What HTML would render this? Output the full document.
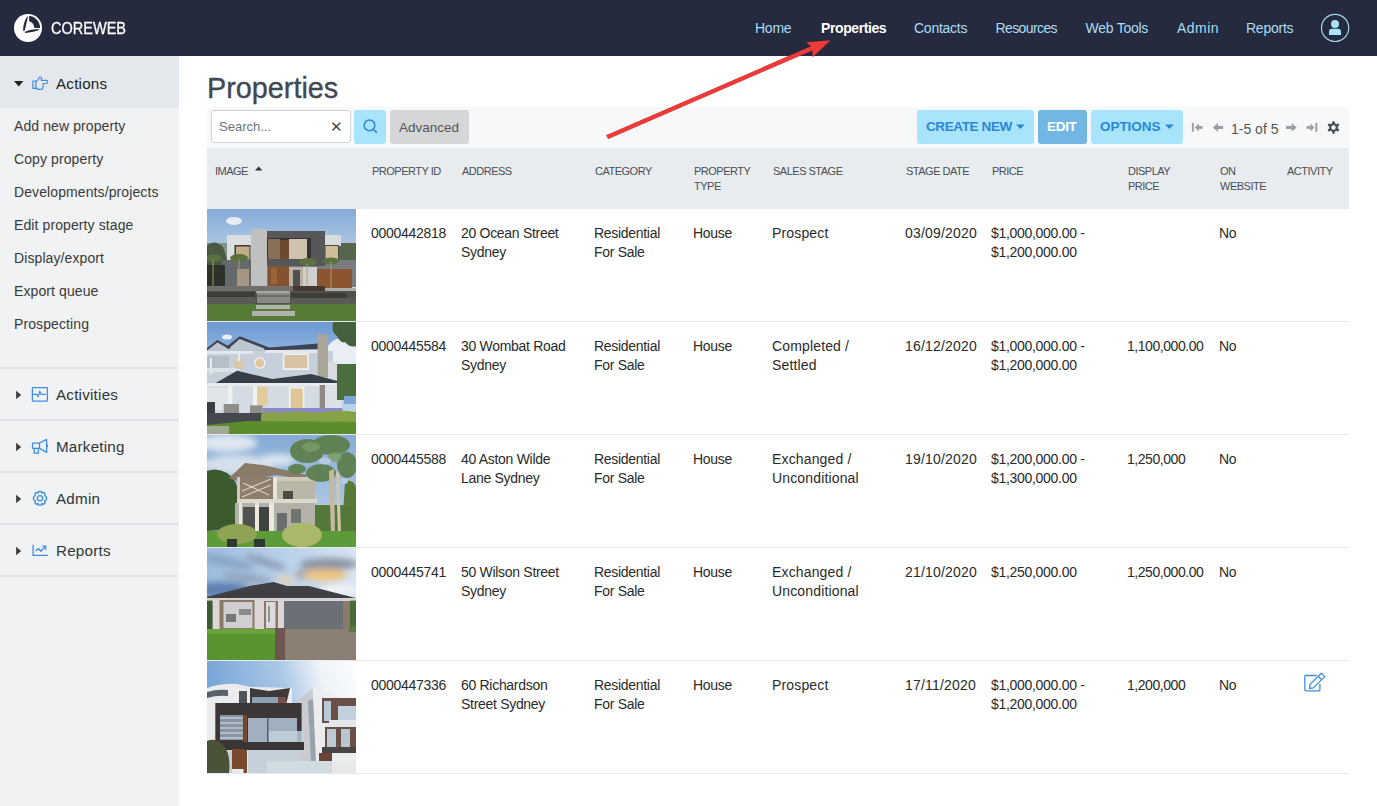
<!DOCTYPE html>
<html><head><meta charset="utf-8">
<style>
*{box-sizing:border-box;margin:0;padding:0}
html,body{width:1377px;height:806px;overflow:hidden;background:#fff;font-family:"Liberation Sans",sans-serif;color:#333}
.a{position:absolute;white-space:nowrap}
#nav{position:absolute;left:0;top:0;width:1377px;height:56px;background:#252a3e}
.nl{position:absolute;top:19px;font-size:14px;letter-spacing:-0.25px;color:#a8def7;line-height:18px}
#side{position:absolute;left:0;top:56px;width:179px;height:750px;background:#f1f2f4}
.si{position:absolute;left:14px;font-size:14px;letter-spacing:0.1px;color:#3a3a3a;line-height:18px}
.sh{position:absolute;left:0;width:179px;height:52px;border-bottom:2px solid #e0e3e7}
.sht{position:absolute;left:56px;font-size:15.2px;letter-spacing:0.22px;color:#30353c;line-height:18px}
.hd{position:absolute;top:163.5px;font-size:11px;letter-spacing:-0.5px;color:#484e56;line-height:15px;text-transform:uppercase}
.td{position:absolute;font-size:14px;letter-spacing:-0.3px;color:#2a2a2a;line-height:19px}
.rowb{position:absolute;left:207px;width:1142px;height:1px;background:#e6e9ed}
.img{position:absolute;left:207px;width:149px;height:112px;overflow:hidden}
</style></head><body>
<div id="nav">
  <svg class="a" style="left:12px;top:12px" width="32" height="32" viewBox="0 0 32 32">
    <circle cx="16" cy="16" r="14" fill="#fff"/>
    <path d="M15.2 4.6 L16 4.4 L12.8 18.4 L11.1 18.9 Q11.1 10.5 15.2 4.6Z" fill="#252a3e"/>
    <path d="M17.1 3.8 A12.2 12.2 0 0 1 28.1 15.9 L22.4 15.9 Q21.6 10.2 17.2 9.6Z" fill="#252a3e"/>
    <path d="M12.4 19.9 Q18 17.1 28 17 Q24 20.1 13.6 20.9Z" fill="#252a3e"/>
  </svg>
  <div class="a" style="left:51px;top:19px;font-size:16.5px;color:#fff;line-height:18px;transform:scaleX(0.88);transform-origin:0 0;-webkit-text-stroke:0.3px #fff">COREWEB</div>
  <div class="nl" style="left:755px">Home</div>
  <div class="nl" style="left:821px;color:#fff;font-weight:bold;letter-spacing:-0.4px">Properties</div>
  <div class="nl" style="left:914px">Contacts</div>
  <div class="nl" style="left:995.5px;letter-spacing:-0.6px">Resources</div>
  <div class="nl" style="left:1085.5px">Web Tools</div>
  <div class="nl" style="left:1177px;letter-spacing:0.45px">Admin</div>
  <div class="nl" style="left:1246px">Reports</div>
  <svg class="a" style="left:1320px;top:13px" width="30" height="30" viewBox="0 0 30 30">
    <circle cx="15.1" cy="14.9" r="13.6" fill="none" stroke="#a2d4ea" stroke-width="1.2"/>
    <circle cx="15" cy="11.1" r="4" fill="#aae2f8"/>
    <path d="M9 22 V18.6 Q9 15.8 12 15.8 H18 Q21 15.8 21 18.6 V22Z" fill="#aae2f8"/>
  </svg>
</div>

<div id="side">
  <div class="sh" style="top:0;background:#e4e7eb;border-bottom:none"></div>
  <svg class="a" style="left:14px;top:25px" width="10" height="6" viewBox="0 0 10 6"><path d="M0 0H9.4L4.7 5.4Z" fill="#222"/></svg>
  <svg class="a" style="left:28px;top:16px" width="24" height="22" viewBox="0 0 24 22" fill="none" stroke="#3c8ee0" stroke-width="1.2" stroke-linejoin="round">
    <path d="M4.9 9 H7.9 V16.4 H4.9 Z"/><path d="M7.9 9.2 L9.6 8.2 Q10.6 7.2 11 5.8 Q11.3 5 12.3 5 Q13.4 5 13.4 6.2 V8.4 H18.2 Q19.6 8.4 19.6 10 Q19.6 11.5 18.2 11.5 H15.3 L14.8 16.2 Q14.6 17.3 13.4 17.3 H10.4 Q9.6 17.3 9.2 16.4 H7.9"/>
  </svg>
  <div class="sht" style="top:19px;color:#222">Actions</div>
  <div class="si" style="top:61px">Add new property</div>
  <div class="si" style="top:94px">Copy property</div>
  <div class="si" style="top:127px">Developments/projects</div>
  <div class="si" style="top:160px">Edit property stage</div>
  <div class="si" style="top:193px">Display/export</div>
  <div class="si" style="top:226px">Export queue</div>
  <div class="si" style="top:259px">Prospecting</div>
  <div class="a" style="left:0;top:311px;width:179px;height:2px;background:#e0e3e7"></div>
  <div class="a" style="left:0;top:363px;width:179px;height:2px;background:#e0e3e7"></div>
  <div class="a" style="left:0;top:415px;width:179px;height:2px;background:#e0e3e7"></div>
  <div class="a" style="left:0;top:467px;width:179px;height:2px;background:#e0e3e7"></div>
  <div class="a" style="left:0;top:519px;width:179px;height:2px;background:#e0e3e7"></div>
<svg class="a" style="left:10px;top:324px" width="50" height="30" viewBox="0 0 50 30" fill="none" stroke="#3c8ee0" stroke-width="1.25" stroke-linejoin="round" stroke-linecap="round"><path d="M6.1 10.8 L11.2 15 L6.1 19.2Z" fill="#3a3d42" stroke="none"/>
<rect x="22.4" y="7.7" width="15" height="13.3" rx="0.6"/><path d="M22.4 14.3 H26.8 L28.1 16.6 L29.8 11.4 L31.1 14.3 H35.6"/></svg>
<svg class="a" style="left:10px;top:376px" width="50" height="30" viewBox="0 0 50 30" fill="none" stroke="#3c8ee0" stroke-width="1.25" stroke-linejoin="round" stroke-linecap="round"><path d="M6.1 10.8 L11.2 15 L6.1 19.2Z" fill="#3a3d42" stroke="none"/>
<rect x="22.5" y="11.2" width="7" height="5.2" rx="0.5"/><path d="M24.2 16.4 V21.2 H28.3 V16.4"/><path d="M29.5 11 L36.6 7.4 V20.4 L29.5 16.4"/><path d="M37.4 13 V14.6"/></svg>
<svg class="a" style="left:10px;top:428px" width="50" height="30" viewBox="0 0 50 30" fill="none" stroke="#3c8ee0" stroke-width="1.25" stroke-linejoin="round" stroke-linecap="round"><path d="M6.1 10.8 L11.2 15 L6.1 19.2Z" fill="#3a3d42" stroke="none"/>
<path id="gr" d="M28.6 7.4 H31.4 L31.9 9.2 L33.6 8.2 L35.3 9.9 L34.6 11.6 L36.5 12.9 V15.7 L34.6 16.9 L35.3 18.7 L33.6 20.4 L31.9 19.4 L31.4 21.2 H28.6 L28.1 19.4 L26.4 20.4 L24.7 18.7 L25.4 16.9 L23.5 15.7 V12.9 L25.4 11.6 L24.7 9.9 L26.4 8.2 L28.1 9.2 Z"/><circle cx="30" cy="14.3" r="2.6"/></svg>
<svg class="a" style="left:10px;top:480px" width="50" height="30" viewBox="0 0 50 30" fill="none" stroke="#3c8ee0" stroke-width="1.25" stroke-linejoin="round" stroke-linecap="round"><path d="M6.1 10.8 L11.2 15 L6.1 19.2Z" fill="#3a3d42" stroke="none"/>
<path d="M23.1 9.1 V19.4 H37.4"/><path d="M26.1 14.7 L28.3 12.5 L30.9 15.3 L35 11"/><path d="M32.6 10.2 H35.8 V13.4"/></svg>
  <div class="sht" style="top:330px">Activities</div>
  <div class="sht" style="top:382px">Marketing</div>
  <div class="sht" style="top:434px">Admin</div>
  <div class="sht" style="top:486px">Reports</div>
</div>

<div class="a" style="left:207px;top:72px;font-size:28.8px;color:#404854;line-height:32px;-webkit-text-stroke:0.35px #404854">Properties</div>

<!-- toolbar -->
<div class="a" style="left:207px;top:107px;width:1142px;height:41px;background:#f7f8fa"></div>
<div class="a" style="left:211px;top:110px;width:140px;height:33px;background:#fff;border:1px solid #cfd3d8;border-radius:3px"></div>
<div class="a" style="left:219px;top:119px;font-size:13px;color:#6c757d;line-height:16px">Search...</div>
<div class="a" style="left:330px;top:119px;font-size:15px;color:#4a4a4a;line-height:16px">&#x2715;</div>
<div class="a" style="left:354px;top:110px;width:32px;height:34px;background:#a8e5fc;border-radius:3px"></div>
<svg class="a" style="left:362px;top:118px" width="18" height="18" viewBox="0 0 18 18" fill="none" stroke="#2e86d0" stroke-width="1.5"><circle cx="7.5" cy="7.4" r="5.3"/><path d="M11.3 11.2L15 14.9"/></svg>
<div class="a" style="left:390px;top:110px;width:79px;height:34px;background:#d5d6d8;border-radius:3px"></div>
<div class="a" style="left:399px;top:120px;font-size:13.5px;color:#555;line-height:16px">Advanced</div>

<div class="a" style="left:917px;top:110px;width:117px;height:34px;background:#a8e5fc;border-radius:3px"></div>
<div class="a" style="left:926px;top:119px;font-size:13.5px;letter-spacing:-0.38px;font-weight:bold;color:#2a87d8;line-height:16px">CREATE NEW</div>
<svg class="a" style="left:1016px;top:124px" width="10" height="6" viewBox="0 0 10 6"><path d="M0 0.4H8.8L4.4 5Z" fill="#2e86d0"/></svg>
<div class="a" style="left:1038px;top:110px;width:49px;height:34px;background:#72b7e4;border-radius:3px"></div>
<div class="a" style="left:1047px;top:119px;font-size:13.5px;letter-spacing:-0.3px;font-weight:bold;color:#fff;line-height:16px">EDIT</div>
<div class="a" style="left:1091px;top:110px;width:92px;height:34px;background:#a8e5fc;border-radius:3px"></div>
<div class="a" style="left:1100px;top:119px;font-size:13.5px;letter-spacing:-0.05px;font-weight:bold;color:#2a87d8;line-height:16px">OPTIONS</div>
<svg class="a" style="left:1165px;top:124px" width="10" height="6" viewBox="0 0 10 6"><path d="M0 0.4H8.8L4.4 5Z" fill="#2e86d0"/></svg>

<svg class="a" style="left:1191px;top:122px" width="150" height="12" viewBox="0 0 150 12">
  <g fill="#9a9ea4">
    <rect x="0.9" y="0.9" width="1.9" height="8.9"/>
    <path d="M3.8 5.4 L7.9 1.4 L7.9 9.4Z"/><rect x="7.6" y="4" width="3.8" height="2.9"/>
    <path d="M21.9 5.4 L27 0.9 L27 9.8Z"/><rect x="26.8" y="3.9" width="5.4" height="3.1"/>
    <path d="M105.7 5.4 L100.6 0.9 L100.6 9.8Z"/><rect x="95" y="3.9" width="5.8" height="3.1"/>
    <path d="M123.4 5.4 L119.3 1.4 L119.3 9.4Z"/><rect x="115.6" y="4" width="3.9" height="2.9"/>
    <rect x="124.4" y="0.9" width="1.9" height="8.9"/>
  </g>
</svg>
<div class="a" style="left:1231px;top:121px;font-size:14px;color:#555;line-height:16px">1-5 of 5</div>
<svg class="a" style="left:1327px;top:121px" width="13" height="13" viewBox="0 0 13 13"><g fill="#4b5058"><circle cx="6.5" cy="6.5" r="4.4"/><g id="gt"><rect x="5.2" y="0.3" width="2.6" height="12.4" rx="0.6"/></g><use href="#gt" transform="rotate(60 6.5 6.5)"/><use href="#gt" transform="rotate(120 6.5 6.5)"/></g><circle cx="6.5" cy="6.5" r="2.2" fill="#f7f8fa"/></svg>

<!-- header -->
<div class="a" style="left:207px;top:148px;width:1142px;height:61px;background:#e9ecef"></div>
<div class="hd" style="left:215px">Image</div>
<svg class="a" style="left:255px;top:166px" width="8" height="5" viewBox="0 0 8 5"><path d="M0 4.6H7.4L3.7 0.6Z" fill="#333"/></svg>
<div class="hd" style="left:372px">Property ID</div>
<div class="hd" style="left:462px">Address</div>
<div class="hd" style="left:595px">Category</div>
<div class="hd" style="left:694px">Property<br>Type</div>
<div class="hd" style="left:773px">Sales Stage</div>
<div class="hd" style="left:906px">Stage Date</div>
<div class="hd" style="left:992px">Price</div>
<div class="hd" style="left:1128px">Display<br>Price</div>
<div class="hd" style="left:1220px">On<br>Website</div>
<div class="hd" style="left:1287px">Activity</div>

<!-- rows -->
<div id="rows">
<div class="img" style="top:209px"><svg width="149" height="112" viewBox="0 0 149 112">
<defs><linearGradient id="sk0" x1="0" y1="0" x2="0" y2="1"><stop offset="0" stop-color="#84abd8"/><stop offset="0.5" stop-color="#c2d6ea"/><stop offset="1" stop-color="#d4e2ec"/></linearGradient></defs>
<rect width="149" height="112" fill="url(#sk0)"/>
<ellipse cx="27" cy="12" rx="8" ry="4" fill="#e6ecf4"/>
<rect x="0" y="34" width="20" height="48" fill="#7e9484"/>
<path d="M0 36 Q8 30 16 38 L20 50 L20 82 L0 82Z" fill="#4a5a40"/>
<rect x="132" y="34" width="17" height="18" fill="#55664a"/>
<rect x="20" y="26" width="24" height="27" fill="#dcdedf"/>
<rect x="27.5" y="36" width="16" height="15.5" fill="#3c3a38"/>
<rect x="29" y="37.5" width="13.5" height="13" fill="#c4ac86"/>
<rect x="117" y="26" width="17" height="11" fill="#dadcdd"/>
<rect x="117" y="36" width="15" height="15.5" fill="#4a4846"/>
<rect x="118.5" y="37" width="12.5" height="14" fill="#d0bc98"/>
<rect x="15" y="51" width="134" height="27" fill="#7a7d80"/>
<rect x="15" y="51" width="29" height="27" fill="#66696b"/>
<rect x="0" y="56" width="18" height="26" fill="#2c3228"/>
<rect x="54" y="22" width="64" height="35" fill="#555759"/>
<rect x="60" y="29" width="44" height="21" fill="#3a3430"/>
<rect x="61" y="30" width="12" height="20" fill="#8a7058"/>
<rect x="73" y="31" width="9" height="19" fill="#6c4a30"/>
<rect x="82" y="30" width="18" height="20" fill="#cfc3b0"/>
<rect x="44" y="20" width="16" height="58" fill="#bfc1c1"/>
<rect x="61" y="57" width="21" height="20" fill="#85522f"/>
<rect x="64" y="59" width="6" height="16" fill="#9a6438"/>
<rect x="82" y="58" width="14" height="19" fill="#b8b0a2"/>
<rect x="86" y="61" width="7" height="16" fill="#50504e"/>
<rect x="96" y="58" width="14" height="20" fill="#cfcfcd"/>
<rect x="110" y="60" width="35" height="20" fill="#8a5530"/>
<rect x="30" y="60" width="12" height="17" fill="#a49680"/>
<g fill="#5a7240">
<path d="M0 50 Q7 42 15 50 Q7 47 0 50Z"/><ellipse cx="7" cy="49" rx="8" ry="3.5"/>
<ellipse cx="32" cy="49" rx="9" ry="4"/><ellipse cx="101" cy="53" rx="9" ry="4"/><ellipse cx="124" cy="52" rx="8" ry="3.5"/>
</g>
<g stroke="#b09c78" stroke-width="0.9"><path d="M6 51V82M32 51V80M100 55V82M124 53V84"/></g>
<rect x="0" y="77" width="86" height="5.5" fill="#716e6b"/>
<rect x="86" y="77" width="32" height="6" fill="#4a3630"/>
<rect x="118" y="79" width="31" height="9" fill="#acacaa"/>
<rect x="0" y="82" width="149" height="14" fill="#4e524a"/>
<rect x="0" y="83" width="48" height="5" fill="#3a3e36"/>
<rect x="84" y="84" width="56" height="5" fill="#3a3e36"/>
<rect x="0" y="88" width="48" height="7" fill="#5a5a55"/>
<rect x="84" y="89" width="65" height="7" fill="#5a5a55"/>
<rect x="50" y="82" width="33" height="12" fill="#8c8a86"/>
<rect x="50" y="86" width="33" height="2" fill="#6e6c6a"/>
<rect x="49" y="82" width="34" height="2" fill="#a6a6a2"/>
<rect x="0" y="95" width="149" height="17" fill="#587a38"/>
<rect x="49" y="96" width="34" height="4" fill="#b0b2b0"/>
<rect x="45" y="102" width="43" height="5" fill="#b0b2b0"/>
</svg></div>
<div class="td" style="left:371px;top:224px">0000442818</div>
<div class="td" style="left:461px;top:224px">20 Ocean Street<br>Sydney</div>
<div class="td" style="left:594px;top:224px">Residential<br>For Sale</div>
<div class="td" style="left:693px;top:224px">House</div>
<div class="td" style="letter-spacing:0.15px;left:772px;top:224px">Prospect</div>
<div class="td" style="letter-spacing:0.2px;left:905px;top:224px">03/09/2020</div>
<div class="td" style="left:991px;top:224px">$1,000,000.00 -<br>$1,200,000.00</div>
<div class="td" style="left:1219px;top:224px">No</div>
<div class="rowb" style="top:321px"></div>
<div class="img" style="top:322px"><svg width="149" height="112" viewBox="0 0 149 112">
<defs><linearGradient id="sk1" x1="0" y1="0" x2="0" y2="1"><stop offset="0" stop-color="#6a99d2"/><stop offset="0.45" stop-color="#a9c6e6"/><stop offset="1" stop-color="#c8daea"/></linearGradient></defs>
<rect width="149" height="112" fill="url(#sk1)"/>
<ellipse cx="20" cy="15" rx="5" ry="2.6" fill="#e6edf5"/>
<path d="M120 26 Q126 14 138 17 Q149 18 149 28 L149 46 L124 46 Q116 38 120 26Z" fill="#e9eef4"/>
<path d="M126 0 H149 V24 Q143 26 138 20 Q134 22 130 14 Q124 10 126 0Z" fill="#45603f"/>
<path d="M0 27 L10 19 L22 25 L33 15 L58 27 L112 22 L115 27 L58 31 L20 32 L0 32Z" fill="#bcc6d2"/>
<path d="M0 26 L10.4 18 L24 25.5 L22 27 L10.4 20.5 L0 28.5Z" fill="#3c4454"/>
<path d="M19 25 L32.7 14.2 L66 27 L64 29 L32.7 17 L21 27Z" fill="#3c4454"/>
<path d="M57 26 L75 24.6 L111 21.6 L116 25 L113 27 L75 28 L58 29Z" fill="#3c4454"/>
<rect x="0" y="29" width="126" height="31" fill="#c6d0da"/>
<rect x="0" y="29" width="46" height="3" fill="#e4e8ec"/>
<rect x="58" y="28" width="56" height="3" fill="#e4e8ec"/>
<rect x="0" y="34" width="22" height="14" fill="#b4bfca"/>
<rect x="3" y="36" width="1.8" height="16" fill="#eef0f2"/>
<rect x="31" y="31" width="1.8" height="17" fill="#eef0f2"/>
<rect x="27" y="39" width="10" height="8" fill="#dcc8a8"/>
<rect x="0" y="46" width="30" height="4" fill="#dde2e8"/>
<circle cx="52.8" cy="41" r="5.8" fill="#eef0f2"/>
<circle cx="52.8" cy="41" r="4.4" fill="#e0c59c"/>
<rect x="75.8" y="31.3" width="26.2" height="16.7" fill="#f0f2f4"/>
<rect x="77.4" y="33" width="23" height="13.2" fill="#d6c3a4"/>
<rect x="110.6" y="12.2" width="10.4" height="43" fill="#a9a598"/>
<rect x="121" y="40" width="9" height="22" fill="#d9dde2"/>
<path d="M8.3 61.2 L30 48.7 L65.4 57 L104 52 L130.7 59 L134 62 L8 63Z" fill="#363e4c"/>
<rect x="0" y="61" width="136" height="3.2" fill="#e8ebee"/>
<rect x="0" y="64" width="135" height="28" fill="#d4dbe2"/>
<rect x="0" y="66" width="22" height="22" fill="#e0e4e8"/>
<rect x="21" y="64" width="4.5" height="20" fill="#eef0f2"/>
<rect x="46" y="64" width="4.5" height="22" fill="#eef0f2"/>
<rect x="50" y="64.7" width="10.5" height="18.7" fill="#e3cb9c"/>
<rect x="82" y="64.7" width="15.4" height="24.3" fill="#f2f3f3"/>
<rect x="83.6" y="66.4" width="12.2" height="21" fill="#dfc59a"/>
<rect x="112.7" y="63" width="5.3" height="29" fill="#8e8a80"/>
<rect x="118" y="63" width="17" height="28" fill="#dde1e6"/>
<rect x="16.7" y="82" width="15.3" height="12.6" fill="#8e8d88"/>
<rect x="43" y="83.4" width="12.6" height="14" fill="#8e8d88"/>
<rect x="0" y="80" width="8" height="12" fill="#3a3d44"/>
<rect x="130" y="42" width="19" height="36" fill="#4c6e3e"/>
<rect x="137" y="74" width="12" height="8" fill="#7aa6d8"/>
<rect x="0" y="91" width="56" height="12" fill="#45484f"/>
<rect x="55.6" y="86" width="80" height="8.6" fill="#8c89c8"/>
<path d="M54 92 Q60 88 70 91 Q90 88 110 91 Q130 87 149 90 V105 H54Z" fill="#85a244"/>
<path d="M0 103 L40 99 L149 100 V112 H0Z" fill="#5c8c2c"/>
<rect x="0" y="104" width="22" height="8" fill="#a2aa94"/>
</svg></div>
<div class="td" style="left:371px;top:337px">0000445584</div>
<div class="td" style="left:461px;top:337px">30 Wombat Road<br>Sydney</div>
<div class="td" style="left:594px;top:337px">Residential<br>For Sale</div>
<div class="td" style="left:693px;top:337px">House</div>
<div class="td" style="letter-spacing:0.15px;left:772px;top:337px">Completed /<br>Settled</div>
<div class="td" style="letter-spacing:0.2px;left:905px;top:337px">16/12/2020</div>
<div class="td" style="left:991px;top:337px">$1,000,000.00 -<br>$1,200,000.00</div>
<div class="td" style="letter-spacing:-0.45px;left:1127px;top:337px">1,100,000.00</div>
<div class="td" style="left:1219px;top:337px">No</div>
<div class="rowb" style="top:434px"></div>
<div class="img" style="top:435px"><svg width="149" height="112" viewBox="0 0 149 112">
<defs><linearGradient id="sk2" x1="0" y1="0" x2="0" y2="1"><stop offset="0" stop-color="#86abd6"/><stop offset="1" stop-color="#c4d6ea"/></linearGradient>
<filter id="bl2" x="-50%" y="-50%" width="200%" height="200%"><feGaussianBlur stdDeviation="3"/></filter></defs>
<rect width="149" height="112" fill="url(#sk2)"/>
<g filter="url(#bl2)">
<ellipse cx="20" cy="8" rx="30" ry="9" fill="#dfe7f0"/>
<ellipse cx="30" cy="30" rx="35" ry="10" fill="#d6e0ec"/>
<ellipse cx="70" cy="25" rx="18" ry="6" fill="#dde6f0"/>
</g>
<path d="M138 46 Q146 44 149 52 L149 80 L136 80Z" fill="#5a7a3a"/>
<rect x="108" y="70" width="41" height="26" fill="#557838"/>
<path d="M0 36 Q10 32 20 38 Q30 44 32 60 L32 94 L0 96Z" fill="#3d5a2e"/>
<path d="M22 43 L38 28 L56 30 L100 40 L98 45 L70 40 L30 46Z" fill="#8a7a6a"/>
<rect x="30" y="42" width="78" height="24" fill="#cfcabd"/>
<rect x="33" y="42" width="33" height="22" fill="#8d7e70"/>
<g stroke="#d6d1c2" stroke-width="1.2"><path d="M35 56 L64 44M35 62 L64 50M36 48 L62 60"/></g>
<rect x="66" y="42" width="4" height="60" fill="#e8e5db"/>
<rect x="70" y="46" width="38" height="18" fill="#bab6a8"/>
<rect x="76" y="56" width="10" height="8" fill="#4d4a44"/>
<rect x="30" y="64" width="80" height="4" fill="#ddd8cc"/>
<rect x="28" y="68" width="80" height="32" fill="#b4b2a8"/>
<rect x="36" y="72" width="12" height="26" fill="#4f524e"/>
<rect x="52" y="72" width="12" height="26" fill="#3e413e"/>
<rect x="70" y="78" width="10" height="20" fill="#6a6e6c"/>
<rect x="84" y="74" width="10" height="14" fill="#727672"/>
<rect x="32" y="68" width="3" height="30" fill="#e8e6de"/>
<rect x="48" y="68" width="4" height="32" fill="#ebe8e0"/>
<rect x="62" y="68" width="5" height="34" fill="#ebe8e0"/>
<g fill="#5c7c48" opacity="0.9">
<ellipse cx="100" cy="16" rx="17" ry="12"/>
<ellipse cx="124" cy="10" rx="19" ry="10"/>
<ellipse cx="140" cy="30" rx="10" ry="13"/>
<ellipse cx="114" cy="38" rx="15" ry="9"/>
<ellipse cx="90" cy="34" rx="9" ry="5"/>
</g>
<g fill="#7e9c66" opacity="0.8"><ellipse cx="104" cy="12" rx="9" ry="5"/><ellipse cx="128" cy="22" rx="7" ry="5"/></g>
<ellipse cx="118" cy="26" rx="6" ry="3.5" fill="#b4cae2"/>
<ellipse cx="137" cy="46" rx="4" ry="3" fill="#b4cae2"/>
<path d="M122 36 L124 100 L128 100 L127 34Z" fill="#c9b89e"/>
<path d="M129 38 L131 100 L134 100 L132 36Z" fill="#d4c6ae"/>
<rect x="0" y="96" width="149" height="16" fill="#5d9a38"/>
<ellipse cx="30" cy="99" rx="20" ry="10" fill="#8ea454"/>
<ellipse cx="95" cy="100" rx="20" ry="12" fill="#a9b86a"/>
<rect x="20" y="104" width="10" height="8" fill="#2e3a30"/>
<rect x="47" y="104" width="11" height="8" fill="#2e3a30"/>
</svg></div>
<div class="td" style="left:371px;top:450px">0000445588</div>
<div class="td" style="left:461px;top:450px">40 Aston Wilde<br>Lane Sydney</div>
<div class="td" style="left:594px;top:450px">Residential<br>For Sale</div>
<div class="td" style="left:693px;top:450px">House</div>
<div class="td" style="letter-spacing:0.15px;left:772px;top:450px">Exchanged /<br>Unconditional</div>
<div class="td" style="letter-spacing:0.2px;left:905px;top:450px">19/10/2020</div>
<div class="td" style="left:991px;top:450px">$1,200,000.00 -<br>$1,300,000.00</div>
<div class="td" style="letter-spacing:-0.45px;left:1127px;top:450px">1,250,000</div>
<div class="td" style="left:1219px;top:450px">No</div>
<div class="rowb" style="top:547px"></div>
<div class="img" style="top:548px"><svg width="149" height="112" viewBox="0 0 149 112">
<defs>
<linearGradient id="sk3" x1="0" y1="0" x2="1" y2="0"><stop offset="0" stop-color="#9cbce0"/><stop offset="0.5" stop-color="#b8d0ea"/><stop offset="1" stop-color="#d8e4f0"/></linearGradient>
<filter id="bl3" x="-50%" y="-50%" width="200%" height="200%"><feGaussianBlur stdDeviation="3"/></filter>
</defs>
<rect width="149" height="112" fill="url(#sk3)"/>
<g filter="url(#bl3)">
<ellipse cx="14" cy="42" rx="30" ry="8" fill="#5f80b0"/>
<ellipse cx="20" cy="14" rx="28" ry="5" fill="#8aa4c8" transform="rotate(12 20 14)"/>
<ellipse cx="58" cy="14" rx="22" ry="4" fill="#8e9cb4" transform="rotate(18 58 14)"/>
<ellipse cx="40" cy="30" rx="26" ry="4" fill="#90a0b8" transform="rotate(8 40 30)"/>
<ellipse cx="122" cy="16" rx="30" ry="6" fill="#8c94a4"/>
<ellipse cx="100" cy="26" rx="12" ry="5" fill="#98a0ac"/>
<ellipse cx="118" cy="27" rx="22" ry="6" fill="#f0c47e"/>
<ellipse cx="132" cy="42" rx="20" ry="6" fill="#eef2f6"/>
<ellipse cx="78" cy="32" rx="10" ry="4" fill="#e8d2b8"/>
</g>
<rect x="0" y="50" width="8" height="32" fill="#3e5a30"/>
<rect x="140" y="52" width="9" height="30" fill="#4a6a38"/>
<path d="M0 48.7 L45 37.5 L66.6 34 L80 38 L101.8 38 L148.7 50 L149 51 L0 51Z" fill="#3f3f44"/>
<rect x="0" y="50" width="149" height="2.6" fill="#d6d2d0"/>
<rect x="5.6" y="52" width="137.4" height="30" fill="#dcd6d8"/>
<rect x="12.5" y="52" width="35" height="30" fill="#8a7866"/>
<rect x="16.5" y="54" width="29" height="26" fill="#cfcfd2"/>
<rect x="19" y="66" width="10" height="8" fill="#767876"/>
<rect x="32" y="61" width="12" height="6" fill="#8a8a8c"/>
<rect x="57" y="53" width="14" height="28" fill="#8a7866"/>
<rect x="59" y="54" width="9.5" height="26" fill="#dcdade"/>
<rect x="61" y="58" width="2" height="16" fill="#8a9a8a"/>
<rect x="77" y="53" width="59" height="28" fill="#6d6f77"/>
<rect x="136" y="53" width="7" height="29" fill="#8a7a6a"/>
<rect x="0" y="81" width="72" height="31" fill="#5a9430"/>
<rect x="0" y="81" width="72" height="5" fill="#6aa23c"/>
<rect x="68" y="80" width="11" height="32" fill="#6e5650"/>
<rect x="78" y="81" width="71" height="31" fill="#8a7f72"/>
<rect x="142" y="78" width="7" height="6" fill="#5a7a40"/>
</svg></div>
<div class="td" style="left:371px;top:563px">0000445741</div>
<div class="td" style="left:461px;top:563px">50 Wilson Street<br>Sydney</div>
<div class="td" style="left:594px;top:563px">Residential<br>For Sale</div>
<div class="td" style="left:693px;top:563px">House</div>
<div class="td" style="letter-spacing:0.15px;left:772px;top:563px">Exchanged /<br>Unconditional</div>
<div class="td" style="letter-spacing:0.2px;left:905px;top:563px">21/10/2020</div>
<div class="td" style="left:991px;top:563px">$1,250,000.00</div>
<div class="td" style="letter-spacing:-0.45px;left:1127px;top:563px">1,250,000.00</div>
<div class="td" style="left:1219px;top:563px">No</div>
<div class="rowb" style="top:660px"></div>
<div class="img" style="top:661px"><svg width="149" height="112" viewBox="0 0 149 112">
<defs><linearGradient id="sk4" x1="0" y1="0.2" x2="1" y2="0"><stop offset="0" stop-color="#76a4d8"/><stop offset="0.5" stop-color="#acc8e6"/><stop offset="0.75" stop-color="#eef3f8"/><stop offset="1" stop-color="#fbfcfd"/></linearGradient></defs>
<rect width="149" height="112" fill="url(#sk4)"/>
<path d="M0 27 Q15 22 30 23 L44 26 L85 27 L85 112 L0 112Z" fill="#e9ebed"/>
<path d="M83 44.5 L105.7 27 L148 41.7 L149 42 L149 112 L83 112Z" fill="#ecedef"/>
<path d="M83 44.5 L105.7 27 L108 112 L83 112Z" fill="#c8ccd1"/>
<path d="M101 40 L104 100 L109 100 L106 38Z" fill="#9ba1a8"/>
<path d="M0 31 Q10 28 21 29 V35 Q10 34 0 37Z" fill="#59616c"/>
<rect x="32" y="30" width="8" height="15" fill="#4e545c"/>
<path d="M43 27 L62 30 L83 27 L79 44 L43 44Z" fill="#3e3a3c"/>
<rect x="45" y="36" width="26" height="8" fill="#8ea0b4"/>
<rect x="71" y="36" width="8" height="8" fill="#7a4e46"/>
<rect x="8.3" y="42" width="86.3" height="43" fill="#3c3636"/>
<rect x="13" y="54" width="23" height="25" fill="#8896a4"/>
<g stroke="#c0cad4" stroke-width="1.3"><path d="M13 57H36M13 62H36M13 67H36M13 72H36M13 77H36"/></g>
<rect x="36.5" y="54" width="3.5" height="58" fill="#7a4a30"/>
<rect x="41" y="57" width="49" height="25" fill="#a0b0c0"/>
<rect x="60" y="57" width="1.5" height="25" fill="#5a6068"/>
<rect x="62" y="70" width="35" height="12" fill="#c4d4dc" opacity="0.8"/>
<rect x="13" y="81" width="84" height="8" fill="#3a3535"/>
<rect x="13" y="89" width="12" height="23" fill="#c8ced4"/>
<rect x="25" y="88" width="12" height="20" fill="#7a4a2e"/>
<rect x="41" y="89" width="50" height="23" fill="#c6d0d8"/>
<rect x="115" y="37" width="34" height="25" fill="#6a5048"/>
<rect x="117" y="40" width="7" height="20" fill="#b9c8d6"/>
<rect x="131" y="45" width="18" height="14" fill="#c2d0dc"/>
<rect x="122" y="59" width="27" height="7" fill="#e4e6e8"/>
<rect x="118" y="66" width="31" height="21" fill="#6a5048"/>
<rect x="120" y="68" width="9" height="18" fill="#bccad6"/>
<rect x="134" y="68" width="9" height="18" fill="#b8c6d2"/>
<rect x="115" y="86" width="34" height="6" fill="#4a4444"/>
<path d="M0 80 Q8 76 16 84 Q24 92 22 112 L0 112Z" fill="#4a5238"/>
<rect x="60" y="100" width="89" height="12" fill="#d0dce2"/>
<rect x="112" y="92" width="13" height="8" fill="#6a4438"/>
<rect x="125" y="100" width="24" height="12" fill="#e6e8ea"/>
</svg></div>
<div class="td" style="left:371px;top:676px">0000447336</div>
<div class="td" style="left:461px;top:676px">60 Richardson<br>Street Sydney</div>
<div class="td" style="left:594px;top:676px">Residential<br>For Sale</div>
<div class="td" style="left:693px;top:676px">House</div>
<div class="td" style="letter-spacing:0.15px;left:772px;top:676px">Prospect</div>
<div class="td" style="letter-spacing:0.2px;left:905px;top:676px">17/11/2020</div>
<div class="td" style="left:991px;top:676px">$1,000,000.00 -<br>$1,200,000.00</div>
<div class="td" style="letter-spacing:-0.45px;left:1127px;top:676px">1,200,000</div>
<div class="td" style="left:1219px;top:676px">No</div>
<div class="rowb" style="top:773px"></div>
<svg class="a" style="left:1298px;top:668px" width="32" height="28" viewBox="0 0 32 28" fill="none" stroke="#3f8fe0" stroke-width="1.3" stroke-linejoin="round">
<path d="M18.8 7.5 H7.8 Q6.8 7.5 6.8 8.5 V21.8 Q6.8 22.8 7.8 22.8 H20.9 Q21.9 22.8 21.9 21.8 V16"/>
<path d="M12 16.4 L23.3 5.2 L26.8 8.6 L15.4 19.9 L11.5 20.5 Z"/><path d="M20.2 8.3 L23.7 11.7"/>
</svg>
</div>
<svg class="a" style="left:0;top:0;filter:drop-shadow(0.8px 0.9px 0.6px rgba(0,0,0,0.45))" width="1377" height="806" viewBox="0 0 1377 806"><path d="M608.2 139.1 L606.2 135.2 L811 46.3 L806 42.3 L830.7 40.2 L812.6 57.2 L812.4 50.4Z" fill="#ef3a3a"/></svg>
</body></html>
